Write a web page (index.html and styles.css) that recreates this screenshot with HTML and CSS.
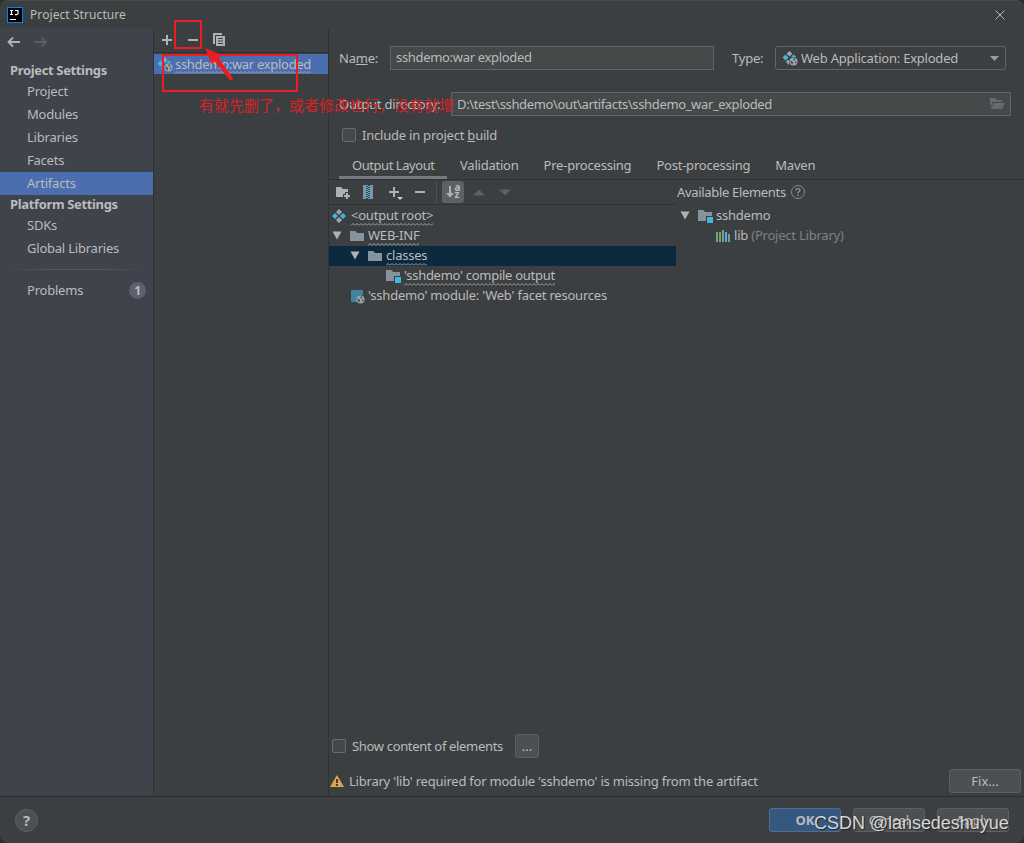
FILE: index.html
```html
<!DOCTYPE html>
<html lang="en">
<head>
    <meta charset="UTF-8">
    <meta name="viewport" content="width=device-width, initial-scale=1.0">
    <title>Project Structure</title>
    <link rel="stylesheet" href="styles.css">
</head>
<body>
    <!-- Shared icons -->
    <svg class="sprite" width="0" height="0">
        <symbol id="minus" viewBox="0 0 16 16"><path d="M3 7h10v2H3z" fill="#afb1b3"/></symbol>
        <symbol id="plus" viewBox="0 0 16 16"><path d="M3 7h4V3h2v4h4v2H9v4H7V9H3z" fill="#afb1b3"/></symbol>
        <symbol id="arrow-down" viewBox="0 0 12 12"><path d="M1.500 1.500h9L6 9.500z" fill="#afb1b3"/></symbol>
        <symbol id="folder" viewBox="0 0 16 16"><path d="M1 3h5.3l1.8 2H15v8H1z" fill="#87939a"/></symbol>
        <symbol id="module" viewBox="0 0 16 16"><path d="M1 2h5.3l1.8 2H15v4H9v5H1z" fill="#87939a"/><path d="M10 9h6v6h-6z" fill="#40b6e0"/></symbol>
        <symbol id="artifact" viewBox="0 0 16 16">
            <path d="M8 1l3 3-3 3-3-3zM8 9l3 3-3 3-3-3z" fill="#9aa7b0"/>
            <path d="M4 5l3 3-3 3-3-3zM12 5l3 3-3 3-3-3z" fill="#40b6e0"/>
        </symbol>
        <symbol id="globe" viewBox="0 0 9 9">
            <circle cx="4.5" cy="4.5" r="4" fill="#9aa7b0"/>
            <path d="M1.300 3.200l2.200 1.200.6 1.400-.6 1.700Q1.300 6.500 1.300 3.200zM4.200 1.300l2.300.5-.4 1.400-1.300.3zM6 4.500l1.700.2-1 1.800-.9-.6z" fill="#4a4f53"/>
        </symbol>
        <symbol id="war" viewBox="0 0 16 16">
            <path d="M7.500 1l2.800 2.800-2.800 2.800-2.800-2.800zM6 9.500l1 1v4.500L4 12z" fill="#9aa7b0"/>
            <path d="M3.500 4.500l3 3-3 3-3-3zM11.500 4.500l3 2.500H9z" fill="#40b6e0"/>
            <use href="#globe" x="7" y="7" width="9" height="9"/>
        </symbol>
    </svg>

    <div class="window">
        <!-- Title bar -->
        <header class="titlebar">
            <svg class="logo" width="16" height="16" viewBox="0 0 16 16">
                <rect x=".5" y=".5" width="15" height="15" fill="#000" stroke="#087cfa"/>
                <path d="M3 3.500h3M4.500 3.500v4M3 7.500h3M8 3.500h3v3q0 1.200-1.500 1.200H8M3 12.500h6" fill="none" stroke="#fff" stroke-width="1.200"/>
            </svg>
            <span class="title">Project Structure</span>
            <svg width="12" height="12" viewBox="0 0 12 12"><path d="M1.500 1.500l9 9M10.500 1.500l-9 9" stroke="#b4b6b7"/></svg>
        </header>

        <div class="content">
            <!-- Settings navigation -->
            <nav class="sidebar">
                <div class="history">
                    <svg width="14" height="12" viewBox="0 0 14 12"><path d="M13 6H1.500M6 1.500L1.500 6 6 10.500" fill="none" stroke="#afb1b3" stroke-width="1.800"/></svg>
                    <svg width="14" height="12" viewBox="0 0 14 12"><path d="M0 6h12M7.500 1.500L12 6l-4.500 4.500" fill="none" stroke="#5b5e63" stroke-width="1.800"/></svg>
                </div>
                <h2>Project Settings</h2>
                <a>Project</a>
                <a>Modules</a>
                <a>Libraries</a>
                <a>Facets</a>
                <a class="selected">Artifacts</a>
                <h2 class="platform">Platform Settings</h2>
                <a>SDKs</a>
                <a>Global Libraries</a>
                <hr>
                <a class="problems">Problems <span class="count">1</span></a>
            </nav>

            <!-- Artifact list -->
            <section class="artifacts">
                <div class="list-tools">
                    <svg width="16" height="16"><use href="#plus"/></svg>
                    <svg width="16" height="16"><use href="#minus"/></svg>
                    <svg width="16" height="16" viewBox="0 0 16 16">
                        <path d="M2 1h9v2H4v9H2z" fill="#afb1b3"/>
                        <path d="M5 4h9v10H5zM7 6v1h5V6zM7 8.500v1h5v-1zM7 11v1h5v-1z" fill="#afb1b3" fill-rule="evenodd"/>
                    </svg>
                </div>
                <div class="artifact">
                    <svg width="16" height="16"><use href="#war"/></svg>
                    <span class="wavy">sshdemo:war exploded</span>
                </div>
            </section>

            <!-- Artifact editor -->
            <main class="editor">
                <div class="row name-row">
                    <label class="name-label">Na<u>m</u>e:</label>
                    <div class="field name-field">sshdemo:war exploded</div>
                    <label class="type-label">Type:</label>
                    <div class="select">
                        <svg width="16" height="16"><use href="#war"/></svg>
                        <span>Web Application: Exploded</span>
                        <svg class="caret" width="9" height="5" viewBox="0 0 9 5"><path d="M0 0h9L4.500 5z" fill="#9a9c9d"/></svg>
                    </div>
                </div>
                <div class="row dir-row">
                    <label class="dir-label">Output directory:</label>
                    <div class="field dir-field">
                        <span>D:\test\sshdemo\out\artifacts\sshdemo_war_exploded</span>
                        <svg width="16" height="16" viewBox="0 0 16 16"><path d="M1 2h5l2 2h5v2H4L1 11z" fill="#646a6d"/><path d="M4.500 7H16l-3 6H1.500z" fill="#646a6d"/></svg>
                    </div>
                </div>
                <div class="row build-row">
                    <span class="checkbox"></span>
                    <label>Include in project <u>b</u>uild</label>
                </div>
                <div class="tabs">
                    <span class="tab active">Output Layout</span>
                    <span class="tab">Validation</span>
                    <span class="tab">Pre-processing</span>
                    <span class="tab">Post-processing</span>
                    <span class="tab">Maven</span>
                </div>

                <div class="panes">
                    <div class="layout-pane">
                        <div class="toolbar">
                            <svg width="16" height="16" viewBox="0 0 16 16"><path d="M1 3h5l2 2h5v3h-3v2H8v3H1z" fill="#afb1b3"/><path d="M11 9h2v2h2v2h-2v2h-2v-2H9v-2h2z" fill="#afb1b3"/></svg>
                            <svg class="archive" width="16" height="16" viewBox="0 0 16 16"><path d="M3 1h3v14H3zM10 1h3v14h-3z" fill="#87939a"/><path d="M7 1v14M9 2v13" stroke="#40b6e0" stroke-width="2" stroke-dasharray="1 1"/></svg>
                            <svg class="add" width="16" height="16" viewBox="0 0 16 16"><path d="M2 7h4V3h2v4h4v2H8v4H6V9H2z" fill="#afb1b3"/><path d="M10 13h6l-3 3z" fill="#cfd0d0"/></svg>
                            <svg class="remove" width="16" height="16"><use href="#minus"/></svg>
                            <span class="divider"></span>
                            <span class="sort">
                                <svg width="8" height="14" viewBox="0 0 8 14"><path d="M3 1h2v7h3l-4 4.500L0 8h3z" fill="#afb1b3"/></svg>
                                <span class="letters"><b>a</b><b>z</b></span>
                            </span>
                            <svg class="up" width="12" height="7" viewBox="0 0 12 7"><path d="M0 6.500L6 .5l6 6z" fill="#5d6062"/></svg>
                            <svg class="down" width="12" height="7" viewBox="0 0 12 7"><path d="M0 .5h12l-6 6z" fill="#5d6062"/></svg>
                        </div>
                        <div class="tree">
                            <div class="node root">
                                <svg width="16" height="16"><use href="#artifact"/></svg>
                                <span class="wavy">&lt;output root&gt;</span>
                            </div>
                            <div class="node level1">
                                <svg class="toggle" width="12" height="12"><use href="#arrow-down"/></svg>
                                <svg width="16" height="16"><use href="#folder"/></svg>
                                <span class="wavy">WEB-INF</span>
                            </div>
                            <div class="node level2 current">
                                <svg class="toggle" width="12" height="12"><use href="#arrow-down"/></svg>
                                <svg width="16" height="16"><use href="#folder"/></svg>
                                <span class="wavy">classes</span>
                            </div>
                            <div class="node level3">
                                <svg width="16" height="16"><use href="#module"/></svg>
                                <span class="wavy">'sshdemo' compile output</span>
                            </div>
                            <div class="node facet">
                                <svg width="16" height="16" viewBox="0 0 16 16"><path d="M2 2h12v5l-5 1-1 6H2z" fill="#3e86a0"/><use href="#globe" x="7" y="7" width="9" height="9"/></svg>
                                <span>'sshdemo' module: 'Web' facet resources</span>
                            </div>
                        </div>
                    </div>

                    <div class="available-pane">
                        <div class="available-title">
                            <span>Available Elements</span>
                            <svg width="16" height="16" viewBox="0 0 16 16"><circle cx="8" cy="8" r="6.500" fill="none" stroke="#87898a"/><path d="M6 6.500Q6 4.500 8 4.500t2 1.800Q10 7.500 8 8.500v1M8 10.500V12" fill="none" stroke="#9a9c9d" stroke-width="1.200"/></svg>
                        </div>
                        <div class="node">
                            <svg class="toggle" width="12" height="12"><use href="#arrow-down"/></svg>
                            <svg width="16" height="16"><use href="#module"/></svg>
                            <span>sshdemo</span>
                        </div>
                        <div class="node library">
                            <svg width="16" height="16" viewBox="0 0 16 16"><path d="M1 4h2v10H1zM7 2h2v12H7zM13 6h2v8h-2z" fill="#87939a"/><path d="M4 4h2v10H4z" fill="#62b543"/><path d="M10 4h2v10h-2z" fill="#40b6e0"/></svg>
                            <span>lib <span class="muted">(Project Library)</span></span>
                        </div>
                    </div>
                </div>

                <div class="row show-row">
                    <span class="checkbox"></span>
                    <label>Show content of elements</label>
                    <button class="more">...</button>
                </div>
                <div class="row warning-row">
                    <svg width="14" height="12" viewBox="0 0 14 12"><path d="M7 0l7 12H0z" fill="#dfa548"/><path d="M6 4h2v4H6zM6 9h2v2H6z" fill="#3c3f41"/></svg>
                    <span>Library 'lib' required for module 'sshdemo' is missing from the artifact</span>
                    <button class="fix">Fix...</button>
                </div>
            </main>
        </div>

        <!-- Dialog buttons -->
        <footer class="buttons">
            <span class="help">?</span>
            <button class="primary">OK</button>
            <button>Cancel</button>
            <button>Apply</button>
        </footer>
    </div>

    <!-- Annotations drawn over the dialog -->
    <div class="mark mark-remove"></div>
    <div class="mark mark-artifact"></div>
    <svg class="mark-arrow" width="32" height="36" viewBox="0 0 32 36"><path d="M0 0l17 7-3.500 3L27.500 29.500a1.800 1.800 0 0 1-2.800 2.200L9.500 13.500 6.500 16z" fill="#ed1c24"/></svg>
    <div class="note">有就先删了，或者修改也行，没有就增</div>
    <div class="watermark">CSDN @lansedeshuyue</div>
</body>
</html>
```
FILE: styles.css
```css
* {
    box-sizing: border-box;
}

body {
    margin: 0;
    background: #2b2d2a;
    color: #bbbbbb;
    font-family: "Noto Sans", "Open Sans", sans-serif;
    font-size: 13px;
    line-height: 20px;
    letter-spacing: -0.22px;
    overflow: hidden;
}

svg {
    display: block;
    flex: none;
}

.sprite {
    position: absolute;
}

.window {
    display: flex;
    flex-direction: column;
    height: 843px;
    background: #3c3f41;
    border-top: 1px solid #4b4c3d;
    border-radius: 8px;
    overflow: hidden;
    white-space: nowrap;
}

/* Title bar */
.titlebar {
    display: flex;
    align-items: center;
    height: 27px;
    padding: 0 18px 0 7px;
}

.title {
    flex: 1;
    margin-left: 7px;
    font-size: 12px;
    letter-spacing: 0.08px;
}

.content {
    display: flex;
    height: 768px;
}

/* Sidebar */
.sidebar {
    width: 154px;
    background: #3e434c;
    border-right: 1px solid #323232;
}

.history {
    display: flex;
    gap: 13px;
    height: 28px;
    padding: 8px 7px 0;
}

.sidebar h2 {
    margin: 0;
    padding: 4px 0 0 10px;
    height: 24px;
    font-size: 13px;
    line-height: 20px;
    letter-spacing: -0.35px;
}

.sidebar .platform {
    height: 19px;
    padding-top: 0;
    line-height: 18px;
}

.sidebar a {
    display: block;
    height: 23px;
    padding-left: 27px;
    line-height: 23px;
}

.sidebar .selected {
    background: #4b6eaf;
}

.sidebar hr {
    height: 1px;
    margin: 9px 8px;
    border: 0;
    background: linear-gradient(to right, transparent, #54565b 30%, #54565b 70%, transparent);
}

.sidebar .problems {
    display: flex;
    justify-content: space-between;
    align-items: center;
    padding-right: 7px;
}

.count {
    width: 17px;
    height: 17px;
    border-radius: 50%;
    background: #5c6070;
    font-weight: bold;
    font-size: 12px;
    line-height: 17px;
    text-align: center;
}

/* Artifact list */
.artifacts {
    width: 175px;
    border-right: 1px solid #323232;
}

.list-tools {
    display: flex;
    align-items: center;
    gap: 10px;
    height: 25px;
    padding-left: 5px;
    border-bottom: 1px solid #323232;
}

.artifact {
    display: flex;
    align-items: center;
    gap: 2px;
    height: 20px;
    margin-top: 1px;
    padding-left: 3px;
    background: #4b6eaf;
    letter-spacing: -0.3px;
}

/* Squiggle under names that have problems */
.wavy {
    background: url("data:image/svg+xml,%3Csvg xmlns='http://www.w3.org/2000/svg' width='4' height='3'%3E%3Cpath d='M0 2.500L2 .5l2 2' fill='none' stroke='%23a0a0a0'/%3E%3C/svg%3E") repeat-x left bottom;
}

/* Editor */
.editor {
    display: flex;
    flex-direction: column;
    flex: 1;
    min-width: 0;
}

.row {
    display: flex;
    align-items: center;
    flex: none;
}

.name-row {
    height: 24px;
    margin-top: 18px;
    padding-left: 10px;
}

.name-label {
    width: 51px;
}

.field {
    height: 24px;
    padding-left: 5px;
    border: 1px solid #646464;
    background: #45494a;
    line-height: 21px;
    letter-spacing: -0.32px;
}

.name-field {
    width: 324px;
}

.type-label {
    width: 61px;
    padding-left: 18px;
}

.select {
    display: flex;
    align-items: center;
    gap: 3px;
    width: 231px;
    height: 24px;
    padding: 0 6px;
    border: 1px solid #646464;
    border-radius: 3px;
}

.caret {
    margin-left: auto;
}

.dir-row {
    height: 24px;
    margin-top: 22px;
    padding-left: 10px;
}

.dir-label {
    width: 112px;
}

.dir-field {
    display: flex;
    align-items: center;
    justify-content: space-between;
    width: 560px;
    padding-right: 5px;
    letter-spacing: -0.36px;
}

.build-row {
    height: 20px;
    margin-top: 9px;
    padding-left: 13px;
    gap: 6px;
}

.checkbox {
    width: 14px;
    height: 14px;
    border: 1px solid #6b6b6b;
    border-radius: 2px;
    background: #43494a;
}

.tabs {
    display: flex;
    height: 35px;
    padding-left: 10px;
    border-bottom: 1px solid #323232;
}

.tab {
    height: 34px;
    padding: 10px 12px 0 13px;
}

.tab.active {
    width: 108px;
    border-bottom: 3px solid #747a80;
    letter-spacing: -0.45px;
}

.panes {
    display: flex;
    flex: 1;
}

.layout-pane {
    width: 347px;
}

.toolbar {
    display: flex;
    align-items: center;
    height: 25px;
    padding-left: 6px;
    border-bottom: 1px solid #323232;
}

.archive {
    margin-left: 9px;
}

.add {
    margin-left: 11px;
}

.remove {
    margin-left: 9px;
}

.divider {
    width: 1px;
    height: 20px;
    margin: 0 5px 0 8px;
    background: #515151;
}

.sort {
    display: flex;
    align-items: center;
    justify-content: center;
    gap: 1px;
    width: 22px;
    height: 22px;
    border-radius: 3px;
    background: #5c6164;
}

.letters {
    display: flex;
    flex-direction: column;
    padding-bottom: 2px;
    font-size: 10px;
    line-height: 7px;
}

.up {
    margin-left: 9px;
}

.down {
    margin-left: 14px;
}

.tree {
    padding-top: 1px;
}

.node {
    display: flex;
    align-items: center;
    gap: 3px;
    height: 20px;
}

/* Text sits slightly above the icon centre */
.node > span {
    height: 20px;
    line-height: 18px;
}

.toggle {
    margin-right: 3px;
}

.root {
    gap: 4px;
    padding-left: 2px;
}

.level1 {
    padding-left: 2px;
}

.level2 {
    padding-left: 20px;
}

.level3 {
    padding-left: 56px;
    letter-spacing: -0.28px;
}

.facet {
    padding-left: 20px;
}

.current {
    background: #0d293e;
}

.available-title {
    display: flex;
    align-items: center;
    gap: 4px;
    height: 24px;
    margin-bottom: 2px;
    padding-left: 1px;
    letter-spacing: -0.32px;
}

.available-pane .node {
    padding-left: 3px;
}

.available-pane .library {
    padding-left: 39px;
}

.muted {
    color: #808080;
}

.show-row {
    height: 26px;
    padding-left: 3px;
}

.show-row label {
    width: 163px;
    margin-left: 6px;
    letter-spacing: -0.33px;
}

button {
    width: 72px;
    height: 24px;
    padding: 0;
    border: 1px solid #5e6060;
    border-radius: 3px;
    background: #4c5052;
    color: #bbbbbb;
    font: inherit;
}

.show-row .more {
    width: 24px;
}

.warning-row {
    height: 24px;
    margin: 10px 0 3px;
    padding: 0 3px 0 1px;
    gap: 5px;
}

.warning-row .fix {
    margin-left: auto;
}

/* Bottom bar */
.buttons {
    display: flex;
    gap: 12px;
    height: 47px;
    padding: 11px 15px 0;
    border-top: 1px solid #2d2d2d;
}

.help {
    width: 23px;
    height: 23px;
    margin: 1px auto 0 0;
    border: 1px solid #5e6060;
    border-radius: 50%;
    background: #4c5052;
    font-size: 15px;
    font-weight: bold;
    line-height: 21px;
    text-align: center;
}

.buttons .primary {
    border-color: #4c708c;
    background: #365880;
    font-weight: bold;
}

/* Annotations */
.mark {
    position: absolute;
    border: 2px solid #ed1c24;
}

.mark-remove {
    left: 174px;
    top: 20px;
    width: 28px;
    height: 29px;
}

.mark-artifact {
    left: 162px;
    top: 54px;
    width: 136px;
    height: 38px;
}

.mark-arrow {
    position: absolute;
    left: 205px;
    top: 48px;
}

.note {
    position: absolute;
    left: 199px;
    top: 94px;
    color: #dc1f25;
    font-family: "Noto Sans CJK SC", sans-serif;
    font-size: 15px;
    line-height: 22px;
    letter-spacing: 0;
    white-space: nowrap;
}

.watermark {
    position: absolute;
    left: 814px;
    top: 811px;
    color: #d5d6d6;
    font-family: "Liberation Sans", Arial, sans-serif;
    font-size: 18px;
    line-height: 24px;
    letter-spacing: -0.04px;
    text-shadow: 1px 1px 1px #222;
    white-space: nowrap;
}
```
